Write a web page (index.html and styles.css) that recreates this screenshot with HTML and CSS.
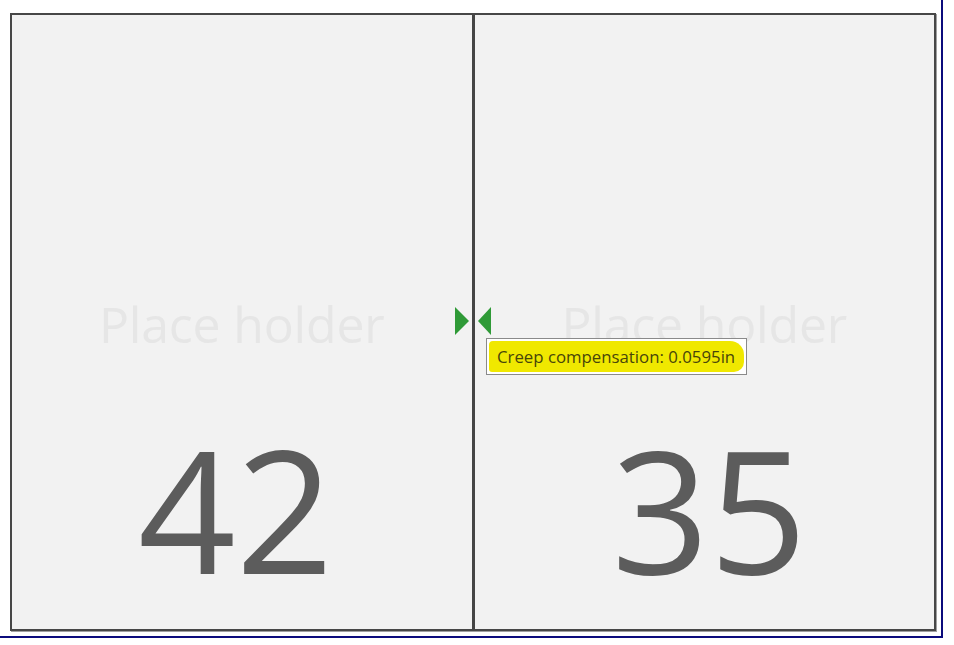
FILE: index.html
```html
<!DOCTYPE html>
<html lang="en">
<head>
    <meta charset="UTF-8">
    <title>Spread preview</title>
    <link rel="stylesheet" href="styles.css">
</head>
<body>
    <div class="window">
        <div class="spread">
            <div class="page page-left">
                <div class="placeholder">Place holder</div>
                <div class="page-number">42</div>
            </div>
            <div class="page page-right">
                <div class="placeholder">Place holder</div>
                <div class="page-number">35</div>
            </div>

            <!-- creep markers around the spine -->
            <svg class="creep-markers" width="36" height="28" viewBox="0 0 36 28">
                <polygon points="0,0 14,14 0,28" fill="#2f9a37"/>
                <polygon points="36,0 23,14 36,28" fill="#2f9a37"/>
            </svg>

            <div class="tooltip">
                <span class="highlight">Creep compensation: 0.0595in</span>
            </div>
        </div>
    </div>
</body>
</html>
```

FILE: styles.css
```css
body {
    margin: 0;
    background-color: #fff;
    font-family: "Open Sans", "Noto Sans", sans-serif;
}

.window {
    width: 943px;
    height: 638px;
    box-sizing: border-box;
    padding: 13px 0 0 10px;
    border-right: 2px solid #0b0b7c;
    border-bottom: 2px solid #0b0b7c;
}

.spread {
    position: relative;
    display: flex;
    width: 926px;
    height: 618px;
    box-sizing: border-box;
    border: 2px solid #474747;
    background-color: #f2f2f2;
    box-shadow: 1px 1px 0 #a0a0a0;
}

.page {
    display: grid;
    flex: 1;
}

.page-left {
    border-right: 3px solid #454545;
}

.placeholder,
.page-number {
    grid-area: 1 / 1;
    text-align: center;
}

.placeholder {
    align-self: center;
    font-size: 50px;
    letter-spacing: -0.2px;
    color: #e6e6e6;
    line-height: 1;
    padding-top: 4px;
}

.page-number {
    align-self: end;
    font-size: 171px;
    line-height: 1;
    color: #5c5c5c;
    padding-bottom: 36px;
}

.page-left .page-number {
    padding-right: 12px;
}

.page-right .page-number {
    padding-left: 10px;
}

/* overlays */
.creep-markers {
    position: absolute;
    left: 443px;
    top: 292px;
}

.tooltip {
    position: absolute;
    left: 474px;
    top: 323px;
    width: 261px;
    height: 37px;
    box-sizing: border-box;
    border: 1px solid #8a8a8a;
    background-color: #fff;
    padding: 2px;
}

.highlight {
    display: block;
    height: 31px;
    padding-left: 8px;
    line-height: 31px;
    font-size: 16.8px;
    color: #48450a;
    background-color: #f0e800;
    border-radius: 4px 14px 10px 3px;
}
```
